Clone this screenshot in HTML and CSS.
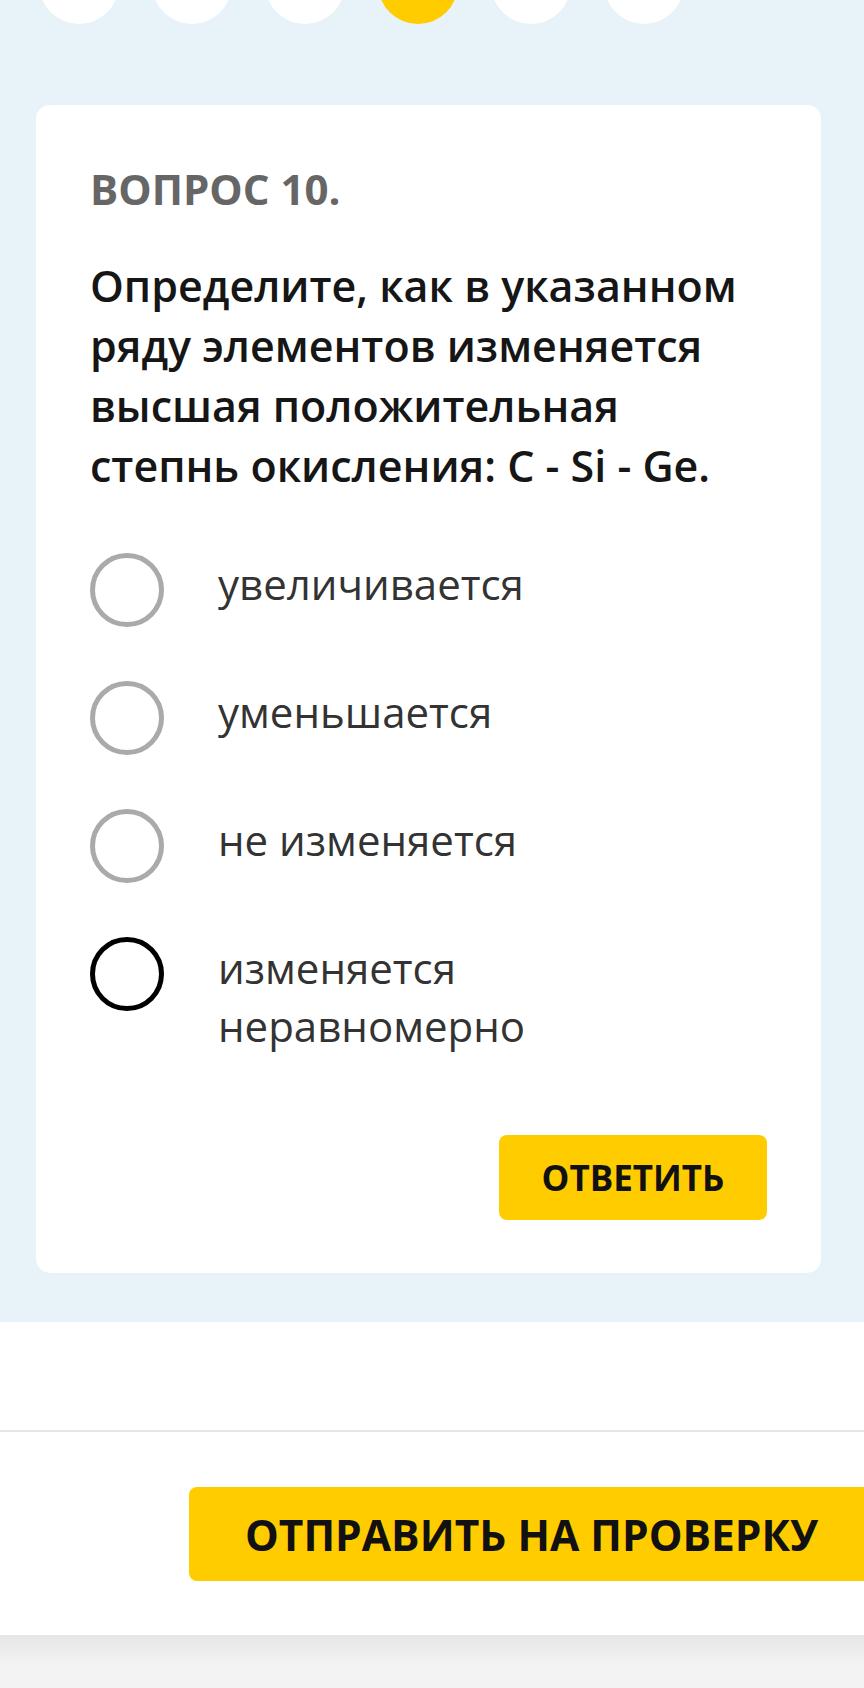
FILE: index.html
```html
<!DOCTYPE html>
<html lang="ru">
<head>
    <meta charset="UTF-8">
    <meta name="viewport" content="width=device-width, initial-scale=1.0">
    <title>Вопрос 10</title>
    <link rel="stylesheet" href="styles.css">
</head>
<body>
    <div class="quiz">
        <div class="steps">
            <span class="step"></span>
            <span class="step"></span>
            <span class="step"></span>
            <span class="step step-active"></span>
            <span class="step"></span>
            <span class="step"></span>
        </div>

        <div class="card">
            <div class="card-label">ВОПРОС 10.</div>
            <div class="card-question">Определите, как в указанном ряду элементов изменяется высшая положительная степнь окисления: C - Si - Ge.</div>

            <ul class="options">
                <li class="option"><span class="radio"></span><span class="option-text">увеличивается</span></li>
                <li class="option"><span class="radio"></span><span class="option-text">уменьшается</span></li>
                <li class="option"><span class="radio"></span><span class="option-text">не изменяется</span></li>
                <li class="option"><span class="radio radio-hover"></span><span class="option-text">изменяется<br>неравномерно</span></li>
            </ul>

            <div class="card-actions">
                <button type="button" class="btn btn-answer">ОТВЕТИТЬ</button>
            </div>
        </div>
    </div>

    <div class="spacer"></div>

    <div class="submit-bar">
        <button type="button" class="btn btn-submit">ОТПРАВИТЬ НА ПРОВЕРКУ</button>
    </div>

    <div class="bottom-bar"></div>
</body>
</html>
```

FILE: styles.css
```css
body { font-family: "Open Sans", "Noto Sans", sans-serif; margin: 0; overflow: hidden; background: #fff; }

.quiz { background: #e8f2f9; padding: 0 43px 49px 36px; }
.steps { display: flex; gap: 33px; padding-left: 3px; margin-top: -56px; margin-bottom: 81px; }
.step { width: 80px; height: 80px; border-radius: 50%; background: #fff; }
.step-active { background: #ffcc00; }

.card { background: #fff; border-radius: 14px; padding: 59px 54px 53px 54px; }
.card-label { font-size: 42px; line-height: 50px; font-weight: 700; color: #666; }
.card-question { margin-top: 42px; font-size: 43px; line-height: 60px; font-weight: 600; color: #161616; }

.options { list-style: none; margin: 57px 0 0 0; padding: 0; }
.option { display: flex; align-items: flex-start; gap: 54px; margin-bottom: 54px; }
.option:last-child { margin-bottom: 0; }
.radio { flex: none; width: 64px; height: 64px; border: 5px solid #aaa; border-radius: 50%; }
.radio-hover { border-color: #000; }
.option-text { padding-top: 2px; font-size: 42px; line-height: 58px; color: #333; }

.card-actions { display: flex; justify-content: flex-end; margin-top: 80px; }
.btn { font-family: inherit; font-weight: 700; color: #111; background: #ffcc00; border: none; border-radius: 8px; cursor: pointer; }
.btn-answer { width: 268px; height: 85px; font-size: 35px; }

.spacer { height: 108px; border-bottom: 2px solid #e6e6e6; }
.submit-bar { padding: 55px 0 54px 189px; }
.btn-submit { display: block; width: 720px; height: 94px; padding: 0 0 0 56px; text-align: left; font-size: 42.5px; white-space: nowrap; }
.bottom-bar { height: 60px; background: linear-gradient(#e6e6e6, #f3f3f3 30px); }
```
